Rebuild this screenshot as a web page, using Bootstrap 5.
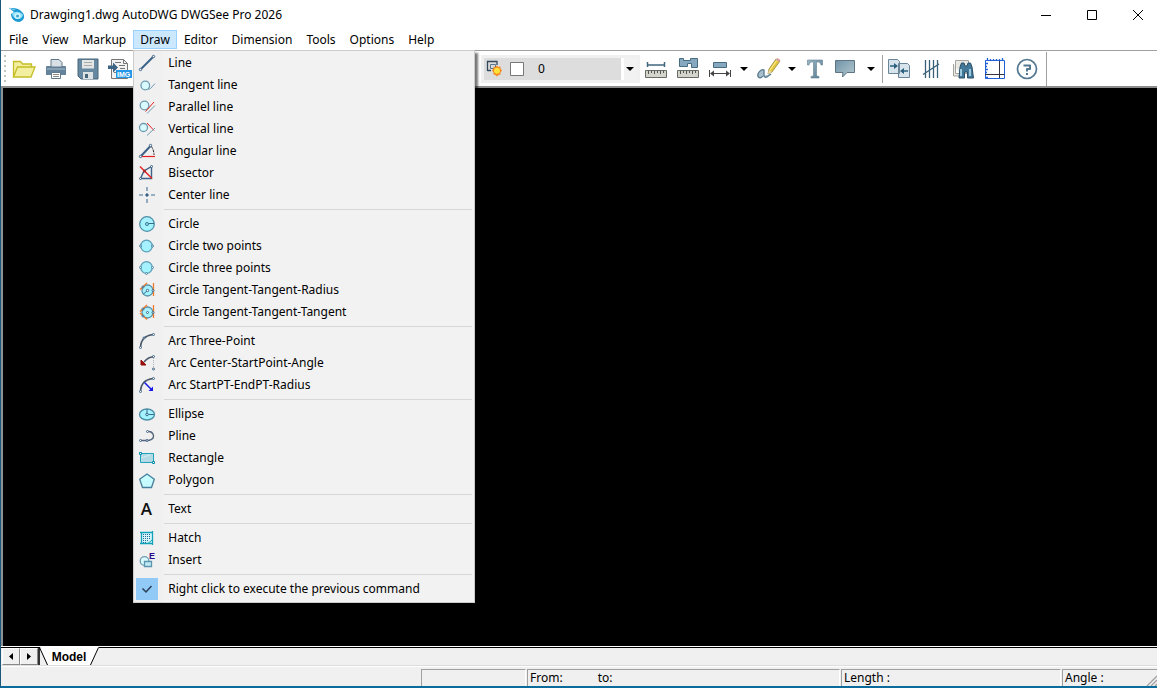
<!DOCTYPE html>
<html lang="en">
<head>
<meta charset="utf-8">
<meta name="viewport" content="width=device-width, initial-scale=1">
<title>Drawging1.dwg AutoDWG DWGSee Pro 2026</title>
<link href="https://cdn.jsdelivr.net/npm/bootstrap@5.3.0/dist/css/bootstrap.min.css" rel="stylesheet">
<style>
  body { font: 12px/16px "Noto Sans", "Open Sans", sans-serif; color: #000; background: #fff; }
  button { color: inherit; background: none; border: 0; padding: 0; }
  svg { display: block; overflow: visible; flex: none; fill: none; }
  .app-window { border-left: 1px solid #1b587a; border-bottom: 2px solid #0b6c9c; overflow: hidden; }
  .title-bar { height: 30px; padding-left: 7px; }
  .win-btns { margin-right: -4px; }
  .win-btn { width: 46px; height: 29px; display: flex; align-items: center; justify-content: center; }
  .menu-bar { height: 20px; padding-left: 1px; }
  .menu-btn { height: 19px; padding: 0 7px; border: 0; display: block; line-height: 19px; }
  .menu-btn.open { background: #cce8ff; box-shadow: inset 0 0 0 1px #99d1ff; }
  .draw-menu { width: 342px; top: 20px; left: 0; margin: 0; padding: 1px 0 2px; font-size: 12px; color: #000;
    border: 1px solid #ccc; border-radius: 0; background: linear-gradient(90deg, #f0f0f0 29px, #f2f2f2 29px); box-shadow: 3px 3px 2px #0008; }
  .draw-item { display: flex; align-items: center; width: 100%; height: 22px; text-align: left; white-space: nowrap; }
  .draw-item:hover { background: #91c9f7; }
  .ico { width: 22px; height: 22px; margin: 0 10px 0 2px; display: flex; align-items: center; justify-content: center; flex: none; }
  .ico.checked { background: #91c9f7; }
  .letter-ico { font: 600 17px/22px "Open Sans", sans-serif; color: #111; padding-right: 2px; }
  .menu-sep { margin: 3px 2px 3px 30px; border-top: 1px solid #d7d7d7; }
  .tool-strip { height: 38px; padding-top: 1px; border-top: 1px solid #a0a0a0; border-bottom: 2px solid #8c8c8c; background: #fff; }
  .grip { width: 2px; height: 28px; margin: 0 2px 0 3px; background: repeating-linear-gradient(#c4c4c4 0 2px, #fff 2px 5px); }
  .tools-left { width: 473px; flex: none; }
  .tool { width: 32px; height: 30px; display: flex; align-items: center; justify-content: center; flex: none; }
  .tool.slim { width: 30px; }
  .drop { width: 16px; height: 30px; display: flex; align-items: center; justify-content: center; flex: none; }
  .drop.wide { width: 22px; }
  .caret { width: 0; height: 0; border: 4px solid transparent; border-top-color: #000; border-bottom: 0; }
  .tool-sep { width: 1px; height: 28px; background: #a0a0a0; }
  .tool-end { width: 1px; height: 34px; margin-left: 3px; background: #a0a0a0; }
  .layer-box { width: 159px; height: 28px; padding: 3px; background: #f0f0f0; flex: none; }
  .layer-select { width: 100%; height: 22px; appearance: none; border: 0; border-radius: 0; padding: 0 0 0 54px; color: #000;
    background: linear-gradient(90deg, #ddd 137px, #fff 137px 140px, #f2f2f2 140px); }
  .layer-mark { left: 3px; top: 2px; pointer-events: none; }
  .layer-caret { right: 3px; top: 9px; pointer-events: none; }
  .canvas-area { background: #000; border-left: 2px solid #8a9199; min-height: 0; }
  .tab-row { height: 20px; background: #f0f0f0; border-top: 1px solid #fff; box-shadow: inset 0 1px #000, inset 0 -1px #ddd; padding: 1px 0 1px 1px; }
  .step-btn { width: 18px; height: 17px; display: flex; align-items: center; justify-content: center; background: #f0f0f0; border: 1px solid #fff; border-right-color: #888; border-bottom-color: #888; }
  .tab-edge { width: 2px; background: #333; height: 17px; }
  .model-tab { width: 60px; height: 18px; padding-right: 2px; font: bold 12px/19px "Liberation Sans", sans-serif; position: relative; }
  .model-tab svg { position: absolute; left: -1px; top: -1px; }
  .model-tab span { position: relative; }
  .status-row { height: 20px; background: #f0f0f0; border-top: 1px solid #fff; padding-top: 2px; }
  .pane { height: 17px; margin-right: 1px; padding-left: 2px; border-left: 1px solid #a0a0a0; border-top: 1px solid #a0a0a0; border-right: 1px solid #fff; flex: none; line-height: 16px; }
  .pane-a { width: 105px; } .pane-b { width: 313px; } .pane-c { width: 220px; } .pane-d { width: 95px; margin-right: 0; border-right: 0; }
  .to-label { margin-left: 35px; }
</style>
</head>
<body>
<svg width="0" height="0" class="position-absolute" aria-hidden="true">
  <defs>
    <linearGradient id="cy" x1="0" y1="0" x2="0" y2="1"><stop offset="0" stop-color="#aef"/><stop offset="1" stop-color="#9ff6ff"/></linearGradient>
    <linearGradient id="bl" x1="0" y1="0" x2="1" y2="1"><stop offset="0" stop-color="#9db8c8"/><stop offset="1" stop-color="#56788d"/></linearGradient>
    <linearGradient id="note" x1="0" y1="0" x2="1" y2="1"><stop offset="0" stop-color="#7193a8"/><stop offset="1" stop-color="#b4cad0"/></linearGradient>
    <symbol id="ruler" viewBox="0 0 24 24" overflow="visible"><path d="M1.500 13.500h21v7h-21z" fill="#d3d4cc" stroke="#666b66"/><path d="M4.500 14v3m3-3v2m3-2v3m3-3v2m3-2v3m3-3v2" stroke="#555"/></symbol>
  </defs>
</svg>
<div class="app-window d-flex flex-column vh-100">
  <header class="title-bar d-flex align-items-center flex-shrink-0">
    <svg width="18" height="16" viewBox="0 0 18 16"><path d="M1 1c5 0 10 0 13 4 4 4 2 9-3 10-5 0-8-4-8-8L6 5z" fill="#1b9ad2"/><path d="M4 7c2-3 8-3 11 1-1 5-9 6-11-1z" fill="#8fe0f8"/><circle cx="9.500" cy="9" r="3" fill="#d4f5fc"/><circle cx="9.500" cy="9" r="1.500" fill="#3aa6d6"/><path d="M1 1l6 2" stroke="#86cceb"/></svg>
    <span class="flex-grow-1 ps-1">Drawging1.dwg AutoDWG DWGSee Pro 2026</span>
    <div class="win-btns d-flex">
      <button class="win-btn" aria-label="Minimize"><svg width="10" height="10"><path d="M0 5.500h10" stroke="#000"/></svg></button>
      <button class="win-btn" aria-label="Maximize"><svg width="10" height="10"><path d="M.5.5h9v9h-9z" stroke="#000"/></svg></button>
      <button class="win-btn" aria-label="Close"><svg width="10" height="10"><path d="M0 0l10 10M10 0L0 10" stroke="#000"/></svg></button>
    </div>
  </header>
  <nav class="menu-bar d-flex flex-shrink-0" aria-label="Main menu">
    <button class="menu-btn">File</button>
    <button class="menu-btn">View</button>
    <button class="menu-btn">Markup</button>
    <div class="dropdown">
      <button class="menu-btn open" aria-expanded="true">Draw</button>
      <div class="dropdown-menu draw-menu show">
        <button class="draw-item"><span class="ico"><svg width="16" height="16"><path d="M2 14L14 2" stroke="#3c6186" stroke-width="2"/><g fill="#fff" stroke="#3c6186"><circle cx="1.500" cy="14.500" r="1.200"/><circle cx="14.500" cy="1.500" r="1.200"/></g></svg></span>Line</button>
        <button class="draw-item"><span class="ico"><svg width="16" height="16"><circle cx="6.300" cy="8.500" r="4.300" fill="#d9fbff" stroke="#6f9bb0" stroke-width="1.300"/><path d="M9.500 12.500l2-1 4.500-5" stroke="#6f9bb0"/></svg></span>Tangent line</button>
        <button class="draw-item"><span class="ico"><svg width="16" height="16"><circle cx="5.500" cy="6.500" r="4.300" fill="#d9fbff" stroke="#6f9bb0" stroke-width="1.300"/><path d="M6.500 12.500L15 3" stroke="#e52020"/><path d="M8 14.500l8-8" stroke="#6f9bb0"/></svg></span>Parallel line</button>
        <button class="draw-item"><span class="ico"><svg width="16" height="16"><circle cx="4.500" cy="6.500" r="4" fill="#d9fbff" stroke="#6f9bb0" stroke-width="1.300"/><path d="M8 2l7 7.500" stroke="#e52020"/><path d="M8 14.500l8-7.500" stroke="#6f9bb0"/></svg></span>Vertical line</button>
        <button class="draw-item"><span class="ico"><svg width="16" height="16"><path d="M2 13L11.500 3" stroke="#3c6186" stroke-width="2"/><path d="M12 3q3 4 3 9" stroke="#222" stroke-dasharray="3 1"/><path d="M3 13.500h13" stroke="#e52020" stroke-width="1.200"/><g fill="#fff" stroke="#3c6186"><circle cx="1.500" cy="13.500" r="1.200"/><circle cx="11.500" cy="2.500" r="1.200"/></g></svg></span>Angular line</button>
        <button class="draw-item"><span class="ico"><svg width="16" height="16"><path d="M1.500 13.500h11V1.500L5 6z" stroke="#3c6186" stroke-width="1.400"/><path d="M1 1.500L13 13.500" stroke="#e52020" stroke-width="1.400"/><circle cx="5.500" cy="6" r="1.500" fill="#a82828"/><g fill="#fff" stroke="#3c6186"><circle cx="1.500" cy="13.500" r="1"/><circle cx="12.500" cy="1.500" r="1"/></g></svg></span>Bisector</button>
        <button class="draw-item"><span class="ico"><svg width="16" height="16"><path d="M0 8h4m2 0h4m2 0h4M8 0v4m0 2v4m0 2v4" stroke="#7b98b4" stroke-width="1.600"/><circle cx="8" cy="8" r="1.300" fill="#3c6186"/></svg></span>Center line</button>
        <div class="menu-sep"></div>
        <button class="draw-item"><span class="ico"><svg width="16" height="16"><circle cx="8" cy="8" r="7.300" fill="url(#cy)" stroke="#4d8fa8" stroke-width="1.300"/><circle cx="8" cy="8" r="1.500" stroke="#386f88"/><path d="M9.500 7.500H15" stroke="#386f88"/></svg></span>Circle</button>
        <button class="draw-item"><span class="ico"><svg width="16" height="16"><circle cx="7.500" cy="8" r="5.800" fill="url(#cy)" stroke="#5b9fb8" stroke-width="1.300"/><g fill="#dff" stroke="#4b80a0"><circle cx="1.500" cy="8" r="1"/><circle cx="13.500" cy="8" r="1"/></g></svg></span>Circle two points</button>
        <button class="draw-item"><span class="ico"><svg width="16" height="16"><circle cx="7.500" cy="7.500" r="5.800" fill="url(#cy)" stroke="#5b9fb8" stroke-width="1.300"/><g fill="#dff" stroke="#4b80a0"><circle cx="1.500" cy="7.500" r="1"/><circle cx="13.500" cy="7.500" r="1"/><circle cx="7.500" cy="13.500" r="1"/></g></svg></span>Circle three points</button>
        <button class="draw-item"><span class="ico"><svg width="16" height="16"><circle cx="8.500" cy="8.500" r="5.500" fill="url(#cy)" stroke="#5b8fa8" stroke-width="1.300"/><path d="M1 7.500L8 1M14.500 1v13" stroke="#ef7a2c" stroke-width="1.300"/><path d="M8.500 8.500l-4 3.500" stroke="#39678a"/><circle cx="8.500" cy="8.500" r="1.200" fill="#fff" stroke="#39678a"/><circle cx="4" cy="5" r="1" fill="#fff" stroke="#39678a"/><circle cx="14" cy="8.500" r="1" fill="#fff" stroke="#39678a"/></svg></span>Circle Tangent-Tangent-Radius</button>
        <button class="draw-item"><span class="ico"><svg width="16" height="16"><circle cx="8.500" cy="8.500" r="5.500" fill="url(#cy)" stroke="#5b8fa8" stroke-width="1.300"/><path d="M1 7.500L8 1M14.500 1v13M1 9l7 6.500" stroke="#ef7a2c" stroke-width="1.300"/><circle cx="8.500" cy="8.500" r="1" fill="#fff" stroke="#39678a"/><g fill="#fff" stroke="#39678a"><circle cx="4" cy="5" r="1"/><circle cx="14" cy="8.500" r="1"/><circle cx="4" cy="12" r="1"/></g></svg></span>Circle Tangent-Tangent-Tangent</button>
        <div class="menu-sep"></div>
        <button class="draw-item"><span class="ico"><svg width="16" height="16"><path d="M1.500 14Q2 3 14 1.500" stroke="#4b5a6b" stroke-width="1.500"/><g fill="#fff" stroke="#3c6186"><circle cx="1.500" cy="14.500" r="1"/><circle cx="5" cy="5" r="1"/><circle cx="14.500" cy="1.500" r="1"/></g></svg></span>Arc Three-Point</button>
        <button class="draw-item"><span class="ico"><svg width="16" height="16"><path d="M5 7q4-5 9-5" stroke="#4b5a6b" stroke-width="1.500"/><path d="M2 5l5 5H2z" fill="#990c0c" stroke="#990c0c"/><path d="M14.500 3v10" stroke="#a9b4bd" stroke-dasharray="1 1"/><g fill="#fff" stroke="#3c6186"><circle cx="14.500" cy="1.500" r="1"/><circle cx="14.500" cy="14" r="1"/></g></svg></span>Arc Center-StartPoint-Angle</button>
        <button class="draw-item"><span class="ico"><svg width="16" height="16"><path d="M1.500 14Q2 3 14 1.500" stroke="#4b5a6b" stroke-width="1.500"/><path d="M5.500 5.500L12 12" stroke="#1717e6" stroke-width="1.500"/><path d="M14 9.500V14H9.500z" fill="#1717e6"/><g fill="#fff" stroke="#3c6186"><circle cx="1.500" cy="14.500" r="1"/><circle cx="14.500" cy="1.500" r="1"/></g></svg></span>Arc StartPT-EndPT-Radius</button>
        <div class="menu-sep"></div>
        <button class="draw-item"><span class="ico"><svg width="16" height="16"><ellipse cx="8" cy="8.500" rx="7.500" ry="5.500" fill="url(#cy)" stroke="#4d8fa8" stroke-width="1.300"/><path d="M8 3v5m1.500.5H15" stroke="#386f88"/><circle cx="8" cy="8.500" r="1.300" stroke="#386f88"/></svg></span>Ellipse</button>
        <button class="draw-item"><span class="ico"><svg width="16" height="16"><path d="M2 12.500h7q6-1 5.500-5-1-4-5-4" stroke="#54657a" stroke-width="1.300"/><g fill="#fff" stroke="#3c6186"><circle cx="1.500" cy="12.500" r="1"/><circle cx="8" cy="12.500" r="1"/><circle cx="8.500" cy="3.500" r="1"/></g></svg></span>Pline</button>
        <button class="draw-item"><span class="ico"><svg width="16" height="16"><path d="M1.500 3.500h13v9h-13z" fill="#b4dbe5" stroke="#1fa3bd"/><path d="M2.500 8l9-3.500" stroke="#d5edf2"/><g fill="#fff" stroke="#008caf"><path d="M.5 2.500h2v2h-2zM13.500 11.500h2v2h-2z"/></g></svg></span>Rectangle</button>
        <button class="draw-item"><span class="ico"><svg width="16" height="16"><path d="M8 2l7.300 5.300L12.500 15.500h-9L.7 7.300z" fill="#c6fbff" stroke="#47809c" stroke-width="1.300"/></svg></span>Polygon</button>
        <div class="menu-sep"></div>
        <button class="draw-item"><span class="ico letter-ico" aria-hidden="true">A</span>Text</button>
        <div class="menu-sep"></div>
        <button class="draw-item"><span class="ico"><svg width="16" height="16"><path d="M2.500 2.500h11v11h-11z" fill="#d8f5fa"/><path d="M1 2.500h13M1 13.500h12M2.500 2v12M13.500 1v14" stroke="#12a3bb" stroke-width="1.300"/><path d="M4 4.500h8M4 6.500h8M4 8.500h7M4 10.500h5M4 12.500h4" stroke="#1d6b9c" stroke-dasharray="1 1"/><path d="M9 13.500l4.500-4" stroke="#12a3bb"/></svg></span>Hatch</button>
        <button class="draw-item"><span class="ico"><svg width="16" height="16"><circle cx="5.500" cy="9" r="4.300" fill="#d9fbff" stroke="#6f9bb0" stroke-width="1.300"/><path d="M5.500 9.500h7v5h-7z" fill="#bfeaf4" stroke="#5c95ad" stroke-width="1.300"/><text x="10" y="7" fill="#2b0d8c" font-family="Liberation Sans, sans-serif" font-size="9" font-weight="700">E</text></svg></span>Insert</button>
        <div class="menu-sep"></div>
        <button class="draw-item" role="menuitemcheckbox" aria-checked="true"><span class="ico checked"><svg width="16" height="16"><path d="M3.500 7.500l3.500 3.500 5.500-6" stroke="#2b3f55" stroke-width="1.500"/></svg></span>Right click to execute the previous command</button>
      </div>
    </div>
    <button class="menu-btn">Editor</button>
    <button class="menu-btn">Dimension</button>
    <button class="menu-btn">Tools</button>
    <button class="menu-btn">Options</button>
    <button class="menu-btn">Help</button>
  </nav>
  <div class="tool-strip d-flex align-items-center flex-shrink-0" role="toolbar" aria-label="Tools">
    <div class="grip"></div>
    <div class="tools-left d-flex">
      <button class="tool" aria-label="Open"><svg width="24" height="24"><path d="M1.500 20V4.500h7l2 2.500h9v3M1.500 20l4-10H23l-4 10z" fill="#f2efa0" stroke="#c5bd25" stroke-width="1.300"/></svg></button>
      <button class="tool" aria-label="Print"><svg width="24" height="24"><path d="M2 10q0-1 1-1h18q1 0 1 1v8H2z" fill="#64839a"/><path d="M7 10V2.500h8l3 3V10z" fill="#d8e0e5" stroke="#60788a"/><path d="M7.500 15.500h9v6h-9z" fill="#fff" stroke="#60788a"/><path d="M9 17.500h6m-6 2h6" stroke="#888"/><path d="M3 12h18" stroke="#a9bfcd"/></svg></button>
      <button class="tool" aria-label="Save"><svg width="24" height="24"><path d="M2 2h20v20H5l-3-3z" fill="#6688a0" stroke="#476579"/><path d="M6 3h12v8.500H6z" fill="#e4e6e6"/><path d="M8 5.500h8m-8 3h8" stroke="#aaa"/><path d="M7 15h10v7H7z" fill="#dde2e4"/><path d="M9 17h3v4H9z" fill="#476579"/></svg></button>
      <button class="tool" aria-label="Export to image"><svg width="24" height="24"><path d="M3.500 2.500h12l4 4v15h-16z" fill="#f2f2f2" stroke="#777"/><path d="M15.500 2.500v4h4M7 5.500h6m-2 3h6m-5 3h5m-11 4h4" stroke="#777"/><path d="M0 8.500h5V5.500l5 5-5 5v-3.500H0z" fill="#3e6484"/><path d="M8 13h16v8H8z" fill="#2497e8"/><text x="9" y="20" fill="#fff" font-family="Liberation Sans, sans-serif" font-size="7" font-weight="700">IMG</text></svg></button>
    </div>
    <div class="layer-box">
      <div class="position-relative">
        <select class="layer-select d-block" aria-label="Layer"><option>0</option></select>
        <svg class="layer-mark position-absolute" width="38" height="18"><path d="M.5 11V1.500h9.500V5M.5 10.500H4" stroke="#33485b" stroke-width="1.300"/><path d="M3.500 4.500h5v4h-5z" fill="#d3dde3" stroke="#5f7587"/><path d="M10 5.500l1.500 1.500 2-.5v2l1.500 2-1.500 2v2l-2 .5L10 16.500 8.500 15l-2-.5v-2L5 10.500l1.500-2v-2l2 .5z" fill="#f58a1f"/><circle cx="10" cy="10.800" r="3" fill="#ffe23b"/><path d="M23.500 2.500h13v13h-13z" fill="#fff" stroke="#777"/></svg>
        <span class="caret layer-caret position-absolute"></span>
      </div>
    </div>
    <button class="tool" aria-label="Measure distance"><svg width="24" height="24"><use href="#ruler"/><path d="M3 8h18M3.500 5v5m17-5v5" stroke="#41687f" stroke-width="1.500"/></svg></button>
    <button class="tool" aria-label="Measure area"><svg width="24" height="24"><use href="#ruler"/><path d="M3.500 9.500v-8h4v2h7v-2h7v9h-6v-4h-4v3z" fill="#86a9bf" stroke="#476c82"/></svg></button>
    <button class="tool" aria-label="Dimension"><svg width="24" height="24"><path d="M5.500 5.500h13v5h-13z" fill="#86a9bf" stroke="#476c82"/><path d="M1.500 13v7m21-7v7M3 16.500h18" stroke="#444"/><path d="M6 13.500l-4 3 4 3zM18 13.500l4 3-4 3z" fill="#444"/></svg></button>
    <button class="drop" aria-label="Dimension options"><span class="caret"></span></button>
    <button class="tool" aria-label="Freehand"><svg width="24" height="24"><path d="M7 19c-2 3-6 2-5-2 1-3 4-5 6-4v5q0 3 3 2l4-3" fill="#a9bfcc" stroke="#55788d" stroke-width="1.300"/><path d="M12 17l1-5 7-10 4 2-8 11z" fill="#e5c83a" stroke="#8f8640" stroke-width=".8"/><path d="M14 13l7-10" stroke="#fff0a0"/><path d="M20 3l1.500-2 3 2L23 5z" fill="#d9a0a0"/><path d="M12 17l1-4 3 2z" fill="#eedcb0"/></svg></button>
    <button class="drop" aria-label="Freehand options"><span class="caret"></span></button>
    <button class="tool slim" aria-label="Text"><svg width="24" height="24"><path d="M4.500 3h15v5h-1.500q-.5-3-2.500-3h-2v13q0 1.500 2.500 1.500V21H8v-1.500q2.500 0 2.500-1.500V5h-2Q6.500 5 6 8H4.500z" fill="url(#bl)" stroke="#5f7f93" stroke-width=".6"/></svg></button>
    <button class="tool slim" aria-label="Comment"><svg width="24" height="24"><path d="M2.500 3.500h19v12H14l-4.500 4.500.5-4.500H2.500z" fill="url(#note)" stroke="#5c7484"/></svg></button>
    <button class="drop wide" aria-label="Comment options"><span class="caret"></span></button>
    <div class="tool-sep"></div>
    <button class="tool" aria-label="Compare"><svg width="24" height="24"><path d="M1.500 2.500h9l2 2v12h-11zM11.500 6.500h9l2 2v12h-11z" fill="#d7e4ec" stroke="#6a8598"/><path d="M3 9h4m14 5h-4" stroke="#2d607f" stroke-width="1.600"/><path d="M7 6l4 3-4 3zM17 11l-4 3 4 3z" fill="#2d607f"/></svg></button>
    <button class="tool" aria-label="Count"><svg width="24" height="24"><path d="M6.500 3v18m4-18v18m4-18v18m4-18v18M4 17.500L20 7" stroke="#3a6078" stroke-width="1.300"/></svg></button>
    <button class="tool" aria-label="Find"><svg width="24" height="24"><path d="M4.500 3.500h13v13h-13zM2.500 7v12h8" fill="#e8e8e4" stroke="#a5a5a0"/><path d="M9 10l1.500-4H13l1 3h2l1-3h2.500l1.500 4 1.500 11h-6v-6h-3v6H8z" fill="#447898" stroke="#284f69"/><path d="M10 12v7m9-7v7" stroke="#a7d2e8" stroke-width="1.800"/></svg></button>
    <button class="tool" aria-label="Ruler"><svg width="24" height="24"><path d="M2.500 3.500h19v18h-19z" stroke="#2161d8"/><path d="M4.500 1v3m3-2v2m3-2v2m3-2v2m3-2v2m3-3v3M2 6.500h3M2 9.500h2M2 12.500h3M2 15.500h2M2 20.500h3" stroke="#2161d8" stroke-width="1.300"/><path d="M2 17.500h19.500M16.500 4v17" stroke="#334"/></svg></button>
    <button class="tool" aria-label="Help"><svg width="24" height="24"><circle cx="12" cy="12" r="9.500" stroke="#537790" stroke-width="1.700"/><path d="M8.500 8.500h6.500v3.500h-3v2.500" stroke="#537790" stroke-width="2" stroke-linejoin="round"/><path d="M11 16h2v2h-2z" fill="#537790"/></svg></button>
    <div class="tool-end"></div>
  </div>
  <main class="canvas-area flex-grow-1" aria-label="Drawing"></main>
  <div class="tab-row d-flex flex-shrink-0">
    <button class="step-btn" aria-label="Previous layout"><svg width="4" height="7"><path d="M4 0v7L0 3.500z" fill="#000"/></svg></button>
    <button class="step-btn" aria-label="Next layout"><svg width="4" height="7"><path d="M0 0v7l4-3.500z" fill="#000"/></svg></button>
    <div class="tab-edge"></div>
    <button class="model-tab"><svg width="61" height="18"><path d="M1 0h59l-8 18H9z" fill="#fff"/><path d="M.5.500L8.500 18M59.500.500L51.500 18" stroke="#000"/></svg><span>Model</span></button>
  </div>
  <footer class="status-row d-flex flex-shrink-0">
    <div class="flex-grow-1"></div>
    <div class="pane pane-a"></div>
    <div class="pane pane-b">From:<span class="to-label">to:</span></div>
    <div class="pane pane-c">Length :</div>
    <div class="pane pane-d d-flex justify-content-between align-items-end">Angle :<svg width="10" height="10"><path d="M0 10L10 0M4 10l6-6M8 10l2-2" stroke="#a0a0a0" stroke-width="1.300"/></svg></div>
  </footer>
</div>
<script src="https://cdn.jsdelivr.net/npm/bootstrap@5.3.0/dist/js/bootstrap.bundle.min.js"></script>
</body>
</html>
